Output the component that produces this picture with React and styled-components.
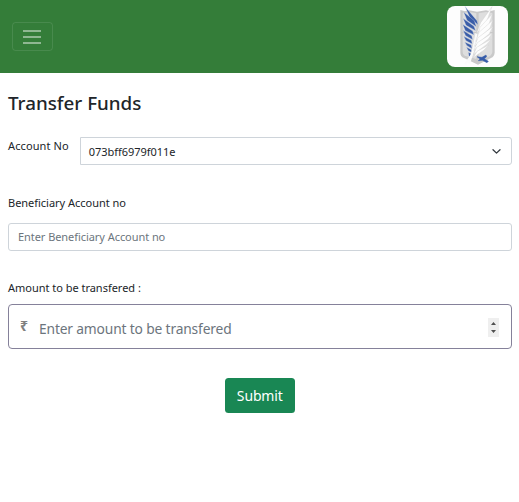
import React from "react";
import styled, { createGlobalStyle } from "styled-components";

const GlobalStyle = createGlobalStyle`
  *, *::before, *::after { box-sizing: border-box; }
  body {
    margin: 0;
    background: #fff;
    color: #212529;
    font-family: "Noto Sans", sans-serif;
    font-size: 11px;
  }
  input, select, button { font-family: inherit; }
`;

const Navbar = styled.nav`
  height: 73px;
  padding: 6px 11px 6px 11.5px;
  display: flex;
  align-items: center;
  justify-content: space-between;
  background: #347d39;
`;

const Toggler = styled.button`
  width: 41px;
  height: 29px;
  padding: 0;
  display: flex;
  align-items: center;
  justify-content: center;
  background: transparent;
  border: 1px solid rgba(255, 255, 255, 0.1);
  border-radius: 3.5px;
`;

const Logo = styled.svg`
  width: 61px;
  height: 61px;
  display: block;
  background: #fdfdfd;
  border-radius: 8px;
`;

const Page = styled.main`
  padding: 18px 7.5px 0 8px;
`;

const Title = styled.h1`
  margin: 0;
  font-size: 18.8px;
  font-weight: 500;
  line-height: 24px;
`;

const AccountRow = styled.div`
  margin-top: 22px;
  display: flex;
  align-items: flex-start;
`;

const Label = styled.label`
  display: block;
  font-size: 11px;
  line-height: 18px;
  letter-spacing: ${(p) => p.$tracking || "-0.02px"};
  white-space: nowrap;
`;

const AccountSelect = styled.div`
  flex: 1;
  height: 28px;
  margin-left: 11px;
  padding: 0 10px 0 8px;
  display: flex;
  align-items: center;
  justify-content: space-between;
  border: 1px solid #ced4da;
  border-radius: 0 3px 3px 0;
  font-size: 11px;
  letter-spacing: -0.05px;
`;

const Field = styled.div`
  margin-top: ${(p) => p.$gap}px;
`;

const TextInput = styled.input`
  display: block;
  width: 100%;
  height: 28px;
  margin-top: 11px;
  padding: 0 9px 1px;
  border: 1px solid #ced4da;
  border-radius: 3px;
  font-size: 11px;
  letter-spacing: -0.06px;
  &::placeholder { color: #6c757d; opacity: 1; }
`;

const AmountBox = styled.div`
  height: 45px;
  margin-top: 7px;
  padding: 0 12px 0 11px;
  display: flex;
  align-items: center;
  border: 1px solid #85819a;
  border-radius: 4px;
`;

const Rupee = styled.span`
  width: 19px;
  font-size: 14px;
  font-weight: 700;
  line-height: 18px;
  margin-bottom: 1px;
  color: #808080;
`;

const AmountInput = styled.input`
  flex: 1;
  min-width: 0;
  padding: 4px 0 0;
  border: 0;
  outline: 0;
  background: transparent;
  font-size: 13.8px;
  letter-spacing: -0.16px;
  &::placeholder { color: #6c757d; opacity: 1; }
`;

const Spinner = styled.svg`
  width: 11px;
  height: 19px;
  margin-top: 1px;
  background: #efefef;
`;

const Actions = styled.div`
  margin-top: 29px;
  display: flex;
  justify-content: center;
`;

const SubmitButton = styled.button`
  width: 70px;
  height: 35px;
  padding: 0;
  border: 0;
  border-radius: 3.5px;
  background: #198754;
  color: #fff;
  font-size: 14px;
  letter-spacing: -0.15px;
`;

const BLUE = [
  "M76 19L82 27L112 62L115 74L92 56Z",
  "M72 36L104 62L110 80L82 61Z",
  "M70 55L103 79L108 92L79 76Z",
  "M69 73L99 93L103 105L77 92Z",
  "M70 91L96 107L99 119L78 107Z",
  "M72 109L95 121L98 132L79 122Z",
  "M75 126L95 135L97 146L82 137Z",
  "M80 141L95 149L97 158L86 152Z",
  "M86 157L97 162L97 173L88 169Z",
];

const WHITE = [
  "M157 20L123 68L110 102L141 64Z",
  "M158 42L121 82L113 112L148 72Z",
  "M159 61L118 97L108 124L151 84Z",
  "M159 80L115 113L104 139L149 101Z",
  "M158 99L113 128L102 151L146 117Z",
  "M155 117L111 142L102 163L140 134Z",
  "M148 135L112 154L101 173L132 151Z",
];

export default function App() {
  return (
    <>
      <GlobalStyle />
      <Navbar>
        <Toggler aria-label="Toggle navigation">
          <svg width="20" height="20" viewBox="0 0 20 20">
            <path d="M1 4H19M1 10H19M1 16H19" stroke="#fff" strokeOpacity=".6" strokeWidth="1.5" />
          </svg>
        </Toggler>
        <Logo viewBox="22 18 183 183">
          <path d="M62 30L76 34L88 31L112 35L139 31L151 34L165 30V158Q164 169 154 174L115 194L73 174Q62 169 62 158Z" fill="#c9c9c9" />
          <path d="M69 39L88 36L110 40V177L75 167Q69 163 69 156ZM117 40L139 36L158 39V156Q157 164 151 168L117 184Z" fill="#dedede" />
          <path d="M66 98H161" stroke="#c5c5c5" strokeWidth="3" />
          {BLUE.map((d) => <path key={d} d={d} fill="#3a5da8" stroke="#dfe5f0" strokeWidth="1" />)}
          <path d="M111 100L102 145L88 190" fill="none" stroke="#fafafa" strokeWidth="7" />
          <path d="M96 165L76 193" stroke="#fafafa" strokeWidth="6" />
          {WHITE.map((d) => <path key={d} d={d} fill="#fdfdfd" stroke="#d2d2d2" strokeWidth="1.2" />)}
          <path d="M112 170L127 172L139 165L141 170L134 176L146 184L142 188L128 181L116 182L121 177Z" fill="#365ca9" stroke="#365ca9" strokeWidth="1.5" />
        </Logo>
      </Navbar>
      <Page>
        <Title>Transfer Funds</Title>
        <AccountRow>
          <Label $tracking="0.11px">Account No</Label>
          <AccountSelect role="combobox" tabIndex={0}>
            073bff6979f011e
            <svg width="9" height="9" viewBox="0 0 9 9">
              <path d="M1 2.8L4.5 6.1L8 2.8" fill="none" stroke="#343a40" strokeWidth="1.3" strokeLinecap="round" strokeLinejoin="round" />
            </svg>
          </AccountSelect>
        </AccountRow>
        <Field $gap={29}>
          <Label htmlFor="beneficiary">Beneficiary Account no</Label>
          <TextInput id="beneficiary" placeholder="Enter Beneficiary Account no" />
        </Field>
        <Field $gap={28}>
          <Label htmlFor="amount">Amount to be transfered :</Label>
          <AmountBox>
            <Rupee>₹</Rupee>
            <AmountInput id="amount" placeholder="Enter amount to be transfered" />
            <Spinner viewBox="0 0 11 19">
              <path d="M3 7L5.5 4L8 7ZM3 12L5.5 15L8 12Z" fill="#505050" />
            </Spinner>
          </AmountBox>
        </Field>
        <Actions>
          <SubmitButton>Submit</SubmitButton>
        </Actions>
      </Page>
    </>
  );
}
